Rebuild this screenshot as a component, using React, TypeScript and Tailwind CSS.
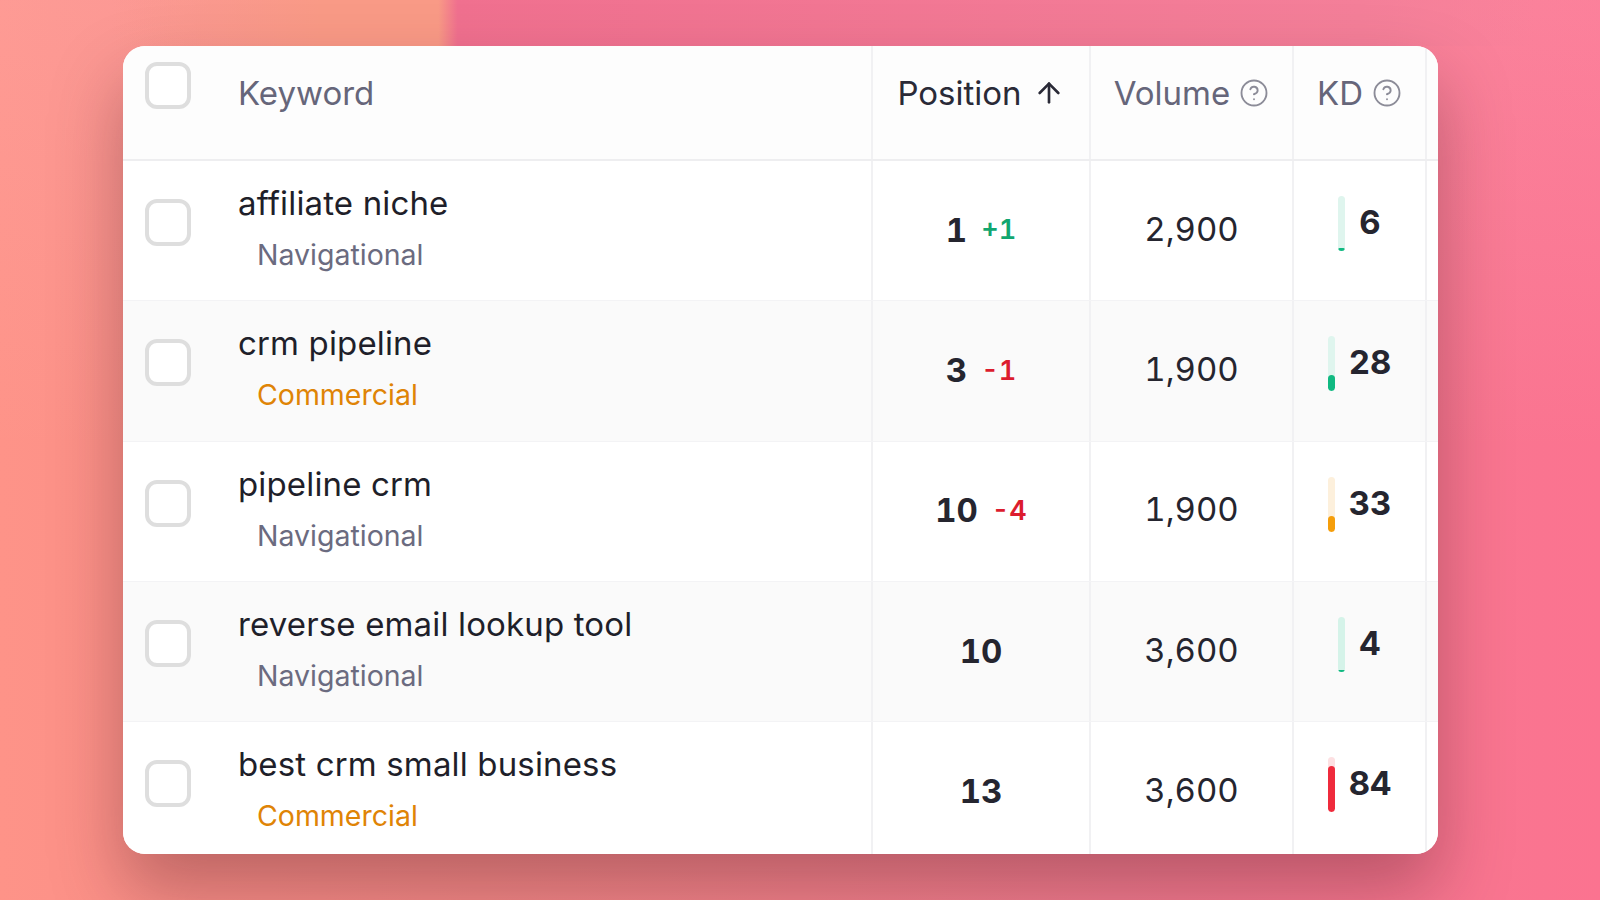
import { ArrowUp, CircleHelp } from "lucide-react";

const rows = [
  { keyword: "affiliate niche", intent: "Navigational", intentColor: "text-[#6b6b80]", pos: "1", change: "+1", changeColor: "text-[#12a66f]", volume: "2,900", kd: "6", track: "bg-[#dff5ee]", fill: "bg-[#10b981] h-[3px]", bg: "bg-white" },
  { keyword: "crm pipeline", intent: "Commercial", intentColor: "text-[#df8406]", pos: "3", change: "-1", changeColor: "text-[#dc1c2e]", volume: "1,900", kd: "28", track: "bg-[#dff5ee]", fill: "bg-[#10b981] h-[16px]", bg: "bg-[#fafafa]" },
  { keyword: "pipeline crm", intent: "Navigational", intentColor: "text-[#6b6b80]", pos: "10", change: "-4", changeColor: "text-[#dc1c2e]", volume: "1,900", kd: "33", track: "bg-[#fdf0dc]", fill: "bg-[#f59e0b] h-[16px]", bg: "bg-white" },
  { keyword: "reverse email lookup tool", intent: "Navigational", intentColor: "text-[#6b6b80]", pos: "10", change: "", changeColor: "", volume: "3,600", kd: "4", track: "bg-[#d5f3e9]", fill: "bg-[#10b981] h-[2px]", bg: "bg-[#fafafa]" },
  { keyword: "best crm small business", intent: "Commercial", intentColor: "text-[#df8406]", pos: "13", change: "", changeColor: "", volume: "3,600", kd: "84", track: "bg-[#fde0e2]", fill: "bg-[#ef2b3c] h-[46px]", bg: "bg-white" },
];

const grid = "grid grid-cols-[750px_218px_203px_133px_11px]";
const cellLine = "border-r-2 border-[#f1f1f3]";

function Checkbox() {
  return <div className="w-[46px] h-[47px] rounded-xl border-4 border-[#dedede] bg-white shrink-0" />;
}

export default function App() {
  return (
    <div className="w-[1600px] h-[900px] overflow-hidden pt-[46px] pl-[123px] bg-no-repeat [background-size:100%_46px,100%_100%,100%_100%] bg-[linear-gradient(90deg,transparent_7%,#f99a86_20%,#f99a86_27.4%,#f0708f_28.6%,#f47f99_85%,transparent_96%),linear-gradient(180deg,rgba(255,190,205,0.18)_0%,transparent_50%),linear-gradient(90deg,#fe9388_0%,#f58a88_30%,#f37c90_70%,#fb7390_100%)] font-['Inter',sans-serif]">
      <div className="w-[1315px] h-[808px] rounded-[22px] bg-white overflow-hidden shadow-[0_36px_70px_rgba(70,20,30,0.34)]">
        <div className={`${grid} h-[115px] border-b-2 border-[#eeeef0] bg-[#fdfdfd] text-[33px] text-[#66667a]`}>
          <div className={`${cellLine} flex items-start pl-[22px]`}>
            <div className="mt-[16px]">
              <Checkbox />
            </div>
            <span className="ml-[47px] mt-[27px] leading-[40px]">Keyword</span>
          </div>
          <div className={`${cellLine} flex justify-center items-start pt-[27px] gap-[11px] text-[#2a2a37]`}>
            <span className="leading-[40px]">Position</span>
            <ArrowUp size={32} strokeWidth={2} className="mt-[4px]" />
          </div>
          <div className={`${cellLine} flex justify-center items-start pt-[27px] gap-[9px]`}>
            <span className="leading-[40px]">Volume</span>
            <CircleHelp size={30} strokeWidth={1.5} className="mt-[5px] text-[#8c8c98]" />
          </div>
          <div className={`${cellLine} flex justify-center items-start pt-[27px] gap-[9px]`}>
            <span className="leading-[40px]">KD</span>
            <CircleHelp size={30} strokeWidth={1.5} className="mt-[5px] text-[#8c8c98]" />
          </div>
          <div />
        </div>
        {rows.map((r) => (
          <div key={r.keyword} className={`${grid} h-[140.3px] ${r.bg} border-b border-[#f3f3f5]`}>
            <div className={`${cellLine} flex items-start pl-[22px]`}>
              <div className="mt-[38px]">
                <Checkbox />
              </div>
              <div className="ml-[47px] pt-[22px]">
                <div className="text-[33px] tracking-[0.15px] leading-[40px] text-[#1f1f2a]">{r.keyword}</div>
                <div className={`ml-[19px] mt-[14px] text-[28.5px] leading-[36px] ${r.intentColor}`}>{r.intent}</div>
              </div>
            </div>
            <div className={`${cellLine} flex justify-center items-center gap-[14px] tabular-nums`}>
              <span className="text-[33px] font-bold text-[#25252f]">{r.pos}</span>
              {r.change && <span className={`text-[27px] font-semibold ${r.changeColor}`}>{r.change}</span>}
            </div>
            <div className={`${cellLine} flex justify-center items-center pb-[2px] text-[33px] tabular-nums text-[#25252f]`}>
              {r.volume}
            </div>
            <div className={`${cellLine} flex justify-center items-start gap-[14px] pt-[35px]`}>
              <div className={`w-[7px] h-[55px] rounded-full flex flex-col justify-end overflow-hidden ${r.track}`}>
                <div className={`rounded-full ${r.fill}`} />
              </div>
              <span className="text-[33px] leading-[40px] mt-[6px] font-bold tabular-nums text-[#25252f]">{r.kd}</span>
            </div>
            <div />
          </div>
        ))}
      </div>
    </div>
  );
}
